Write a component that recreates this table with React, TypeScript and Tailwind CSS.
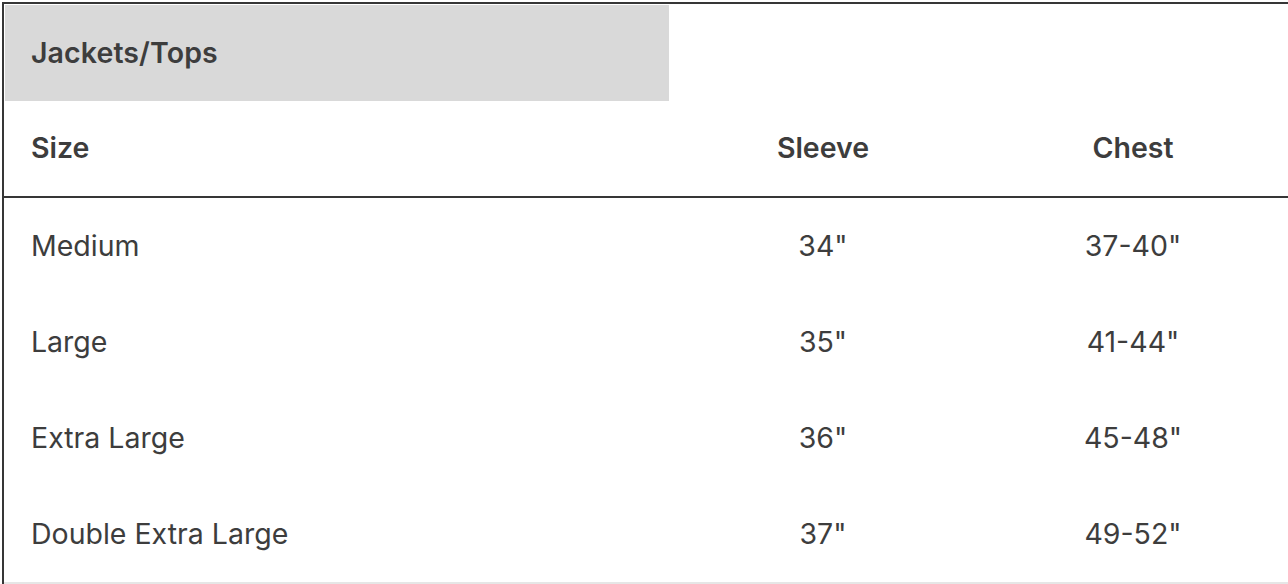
import React from "react";

const rows = [
  { size: "Medium", sleeve: '34"', chest: '37-40"' },
  { size: "Large", sleeve: '35"', chest: '41-44"' },
  { size: "Extra Large", sleeve: '36"', chest: '45-48"' },
  { size: "Double Extra Large", sleeve: '37"', chest: '49-52"' },
];

const cols = "grid grid-cols-[665px_308px_312px]";

export default function App() {
  return (
    <div
      className="w-[1288px] h-[584px] overflow-hidden bg-white text-[#3d3d3d]"
      style={{ fontFamily: "Inter, 'Noto Sans', sans-serif" }}
    >
      <div className="ml-[2px] mt-[2px] w-[1300px] h-[600px] border-l-2 border-t-2 border-[#363636]">
        {/* Title */}
        <div className="ml-[1px] mt-[1px] w-[664px] h-[96px] bg-[#d9d9d9] flex items-center pl-[26px]">
          <span className="text-[28.5px] font-semibold tracking-[0.1px]">Jackets/Tops</span>
        </div>

        {/* Header */}
        <div className={`${cols} h-[97px] border-b-2 border-[#363636] items-center text-[28.5px] font-semibold`}>
          <div className="pl-[27px]">Size</div>
          <div className="text-center">Sleeve</div>
          <div className="text-center">Chest</div>
        </div>

        {/* Body */}
        {rows.map((r, i) => (
          <div
            key={r.size}
            className={`${cols} h-[96px] items-center text-[28.5px] ${
              i === rows.length - 1 ? "border-b-2 border-[#e6e6e6] h-[98px]" : ""
            }`}
          >
            <div className="pl-[27px]">{r.size}</div>
            <div className="text-center">{r.sleeve}</div>
            <div className="text-center">{r.chest}</div>
          </div>
        ))}
      </div>
    </div>
  );
}
